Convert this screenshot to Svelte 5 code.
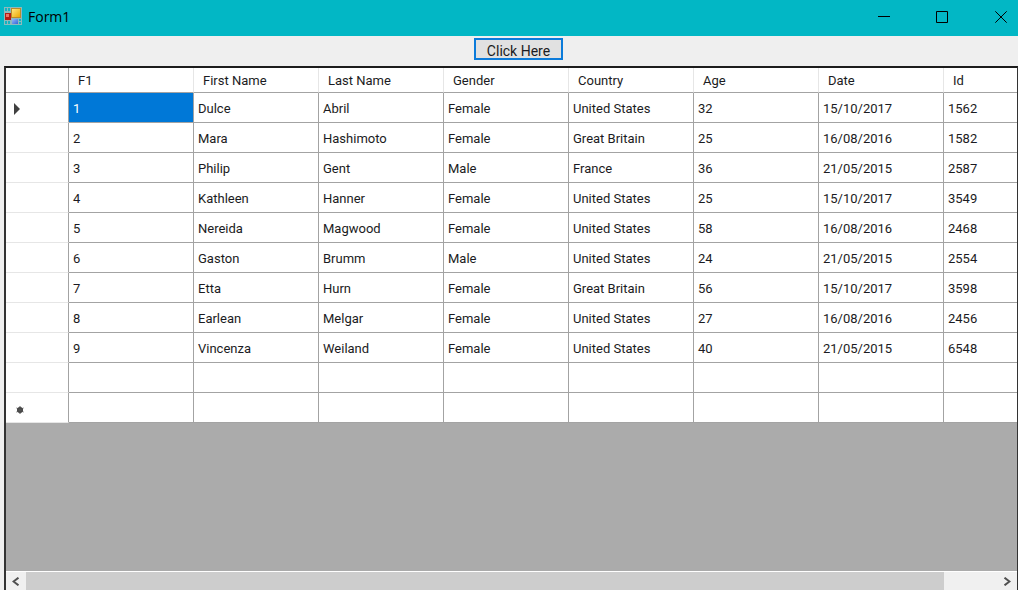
<script>
  const columns = ['F1', 'First Name', 'Last Name', 'Gender', 'Country', 'Age', 'Date', 'Id'];
  const rows = [
    ['1', 'Dulce', 'Abril', 'Female', 'United States', '32', '15/10/2017', '1562'],
    ['2', 'Mara', 'Hashimoto', 'Female', 'Great Britain', '25', '16/08/2016', '1582'],
    ['3', 'Philip', 'Gent', 'Male', 'France', '36', '21/05/2015', '2587'],
    ['4', 'Kathleen', 'Hanner', 'Female', 'United States', '25', '15/10/2017', '3549'],
    ['5', 'Nereida', 'Magwood', 'Female', 'United States', '58', '16/08/2016', '2468'],
    ['6', 'Gaston', 'Brumm', 'Male', 'United States', '24', '21/05/2015', '2554'],
    ['7', 'Etta', 'Hurn', 'Female', 'Great Britain', '56', '15/10/2017', '3598'],
    ['8', 'Earlean', 'Melgar', 'Female', 'United States', '27', '16/08/2016', '2456'],
    ['9', 'Vincenza', 'Weiland', 'Female', 'United States', '40', '21/05/2015', '6548'],
    ['', '', '', '', '', '', '', ''],
    ['', '', '', '', '', '', '', '']
  ];
  let selRow = $state(0);
  let selCol = $state(0);
</script>

<div class="window">
  <header class="titlebar">
    <svg class="logo" width="18" height="18" viewBox="0 0 18 18" aria-hidden="true">
      <defs>
        <linearGradient id="gold" x1="0" y1="0" x2="1" y2="1">
          <stop offset="0" stop-color="#ffe680" />
          <stop offset="1" stop-color="#eda800" />
        </linearGradient>
        <linearGradient id="blue" x1="0" y1="0" x2="1" y2="1">
          <stop offset="0" stop-color="#94b8fa" />
          <stop offset="1" stop-color="#3466d8" />
        </linearGradient>
      </defs>
      <rect width="18" height="18" fill="#8fb9bc" />
      <path d="M1 1h2v3H1zM4 1h2v3H4zM1 14h2v3H1zM4 14h2v3H4zM15 12h2v2h-2zM15 15h2v2h-2z" fill="#12b4c2" />
      <rect x="7" y="1" width="10" height="10" fill="#b98a2c" />
      <rect x="8" y="2" width="8" height="8" fill="url(#gold)" />
      <rect x="1" y="6" width="6" height="7" fill="#b51d16" />
      <rect x="2" y="7" width="3" height="3" fill="#ea7566" />
      <rect x="8" y="12" width="6" height="5" fill="url(#blue)" />
    </svg>
    <span class="title">Form1</span>
    <div class="caption">
      <button aria-label="Minimize">
        <svg width="12" height="12" viewBox="0 0 12 12"><path d="M0 5.500h12" /></svg>
      </button>
      <button aria-label="Maximize">
        <svg width="12" height="12" viewBox="0 0 12 12"><path d="M.5.500h11v11H.5z" /></svg>
      </button>
      <button aria-label="Close">
        <svg width="12" height="12" viewBox="0 0 12 12"><path d="M.3.300l11.400 11.400M11.700.300.3 11.700" /></svg>
      </button>
    </div>
  </header>

  <div class="toolbar"><button class="action">Click Here</button></div>

  <main class="grid">
    <div class="view">
      <table>
        <colgroup>
          <col class="row-head" />
          {#each columns as _}<col class="data" />{/each}
        </colgroup>
        <thead>
          <tr>
            <th class="corner"></th>
            {#each columns as name}<th scope="col">{name}</th>{/each}
          </tr>
        </thead>
        <tbody>
          {#each rows as row, r}
            <tr>
              <th scope="row" class="marker">
                {#if r === selRow}
                  <svg width="8" height="12" viewBox="0 0 8 12"><path d="M1 0l6 6-6 6z" fill="#404040" /></svg>
                {:else if r === rows.length - 1}
                  <svg class="new" width="8" height="8" viewBox="0 0 8 8">
                    <circle cx="4" cy="4" r="3" fill="#404040" />
                    <path d="M4 0v8M.5 2l7 4M7.500 2l-7 4" stroke="#555" />
                  </svg>
                {/if}
              </th>
              {#each row as value, c}
                <td class:selected={r === selRow && c === selCol} onclick={() => { selRow = r; selCol = c; }}>{value}</td>
              {/each}
            </tr>
          {/each}
        </tbody>
      </table>
    </div>
    <div class="scroll">
      <button aria-label="Scroll left">
        <svg width="8" height="9" viewBox="0 0 8 9"><path d="M6.500.700l-5 3.800 5 3.800" /></svg>
      </button>
      <div class="track"><div class="thumb"></div></div>
      <button aria-label="Scroll right">
        <svg width="8" height="9" viewBox="0 0 8 9"><path d="M1.500.700l5 3.800-5 3.800" /></svg>
      </button>
    </div>
  </main>
</div>

<style>
  .window {
    display: flex;
    flex-direction: column;
    height: 100vh;
    background: #efefef;
    color: #1b1b22;
    font: 13px/16px Roboto, sans-serif;
  }
  button {
    font: inherit;
    color: inherit;
    border: 0;
    padding: 0;
    background: none;
  }
  .titlebar {
    display: flex;
    align-items: center;
    flex: none;
    height: 36px;
    padding-left: 4px;
    background: #02b7c5;
    color: #000;
  }
  .logo { margin-bottom: 4px; }
  .title {
    flex: 1;
    padding: 0 0 2px 6px;
    font: 14px/20px "Open Sans", sans-serif;
  }
  .caption {
    display: flex;
    align-self: flex-start;
    height: 34px;
  }
  .caption button {
    display: flex;
    align-items: center;
    justify-content: center;
    width: 58px;
  }
  .caption button:last-child {
    justify-content: flex-end;
    width: 47px;
    padding-right: 11px;
  }
  .caption svg {
    fill: none;
    stroke: #000;
  }
  .toolbar {
    display: flex;
    justify-content: center;
    flex: none;
    height: 30px;
    padding: 2px 0 6px 19px;
    box-sizing: border-box;
  }
  .action {
    width: 89px;
    border: 2px solid #0b7bda;
    background: #e1e1e1;
    padding-top: 3px;
    font-size: 14px;
  }
  .grid {
    display: flex;
    flex-direction: column;
    flex: 1;
    min-height: 0;
    margin-left: 4px;
    border: solid #333;
    border-width: 2px 1px 0 2px;
    border-top-color: #1c1c1c;
    background: #ababab;
  }
  .view {
    flex: 1;
    min-height: 0;
    overflow: hidden;
  }
  table {
    width: 0;
    table-layout: fixed;
    border-collapse: separate;
    border-spacing: 0;
  }
  .row-head { width: 63px; }
  .data { width: 125px; }
  th, td {
    box-sizing: border-box;
    height: 30px;
    padding: 2px 4px 0;
    border: solid #a3a3a3;
    border-width: 0 1px 1px 0;
    background: #fff;
    text-align: left;
    font-weight: 400;
    white-space: nowrap;
  }
  thead th {
    height: 25px;
    padding: 2px 9px 0;
    border-right-color: #e6e6e6;
  }
  thead .corner { border-right-color: #a3a3a3; }
  .marker {
    padding: 2px 7px 0;
    border-bottom-color: #e6e6e6;
  }
  .marker svg { display: block; }
  .marker .new { margin: 2px 0 0 3px; }
  .selected {
    background: #0078d7;
    color: #fff;
  }
  .scroll {
    display: flex;
    flex: none;
    height: 19px;
    border-top: 1px solid #fff;
    box-sizing: border-box;
    background: #f0f0f0;
  }
  .scroll button {
    display: flex;
    align-items: center;
    justify-content: center;
    width: 20px;
  }
  .scroll svg {
    fill: none;
    stroke: #505050;
    stroke-width: 2;
  }
  .track { flex: 1; }
  .thumb {
    width: 94.5%;
    height: 100%;
    background: #cdcdcd;
  }
</style>
